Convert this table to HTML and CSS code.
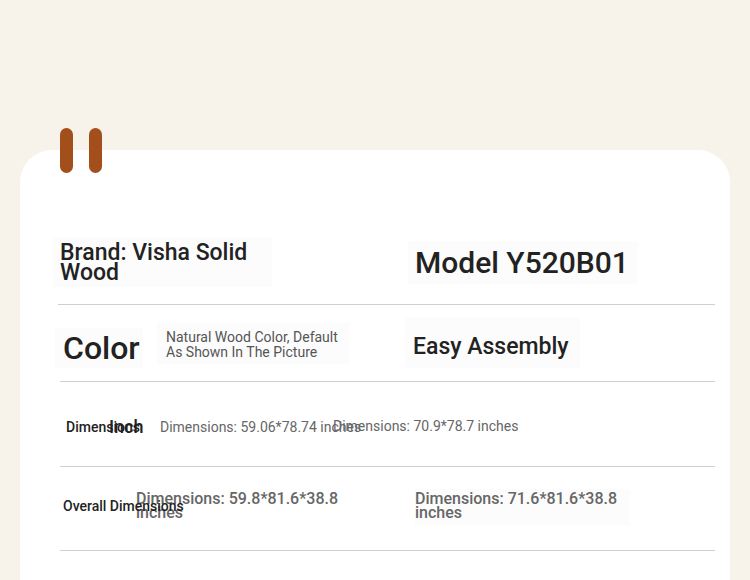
FILE: index.html
```html
<!DOCTYPE html>
<html>
<head>
<meta charset="utf-8">
<link rel="stylesheet" href="styles.css">
</head>
<body>
<div class="page">
  <div class="card">
    <div class="bars"><span class="bar"></span><span class="bar"></span></div>
    <div class="row row1">
      <div class="cell brand">Brand: Visha Solid Wood</div>
      <div class="cell model">Model Y520B01</div>
    </div>
    <div class="row row2">
      <div class="cell color">Color</div>
      <div class="cell natural">Natural Wood Color, Default As Shown In The Picture</div>
      <div class="cell easy">Easy Assembly</div>
    </div>
    <div class="row row3">
      <div class="cell dim-label">Dimensions</div>
      <div class="cell inch">Inch</div>
      <div class="cell dim-a">Dimensions: 59.06*78.74 inches</div>
      <div class="cell dim-b">Dimensions: 70.9*78.7 inches</div>
    </div>
    <div class="row row4">
      <div class="cell overall">Overall Dimensions</div>
      <div class="cell ov-a">Dimensions: 59.8*81.6*38.8 inches</div>
      <div class="cell ov-b">Dimensions: 71.6*81.6*38.8 inches</div>
    </div>
  </div>
</div>
</body>
</html>
```
FILE: styles.css
```css
html, body {
  margin: 0;
  padding: 0;
}
body {
  background: #f8f3ea;
  font-family: Roboto, "Liberation Sans", sans-serif;
  color: #222;
  width: 750px;
  height: 580px;
  overflow: hidden;
}
.page {
  padding: 150px 20px 0 20px;
}
.card {
  position: relative;
  background: #fff;
  border-radius: 32px;
  height: 460px;
  padding: 70px 15px 0 40px;
  box-sizing: border-box;
}
.bars {
  position: absolute;
  left: 40px;
  top: -22px;
  display: flex;
  gap: 16px;
}
.bar {
  width: 13px;
  height: 45px;
  border-radius: 7px;
  background: #a24f1c;
}
.row {
  display: flex;
  align-items: center;
  border-bottom: 1px solid #cfcfcf;
}
.cell {
  box-sizing: border-box;
  flex: none;
  background: #fcfcfc;
}
.row1 {
  height: 84px;
  margin-left: -2px;
}
.brand {
  margin-left: -5px;
  width: 219px;
  padding: 6px 7px 4px 7px;
  font-size: 23px;
  line-height: 20px;
  font-weight: 500;
}
.model {
  margin-left: 136px;
  width: 230px;
  padding: 0 7px;
  height: 43px;
  line-height: 43px;
  font-size: 30px;
  font-weight: 500;
  white-space: nowrap;
}
.row2 {
  height: 76px;
}
.color {
  margin-left: -5px;
  width: 88px;
  padding-left: 8px;
  font-size: 32px;
  line-height: 40px;
  font-weight: 500;
  margin-top: 9px;
}
.natural {
  margin-left: 14px;
  width: 193px;
  padding: 8px 9px 4px 9px;
  font-size: 14px;
  line-height: 15px;
  color: #555;
  font-weight: 400;
}
.easy {
  margin-left: 55px;
  width: 175px;
  padding: 16px 5px 8px 8px;
  font-size: 23px;
  line-height: 26px;
  font-weight: 500;
}
.row3 {
  height: 84px;
}
.dim-label {
  width: 49px;
  padding-left: 6px;
  font-size: 14px;
  white-space: nowrap;
  font-weight: 500;
  line-height: 30px;
  margin-top: 6px;
  background: transparent;
  position: relative;
}
.inch {
  width: 51px;
  font-size: 18px;
  line-height: 30px;
  white-space: nowrap;
  font-weight: 500;
  margin-top: 6px;
  background: transparent;
}
.dim-a {
  width: 173px;
  font-size: 14px;
  color: #666;
  white-space: nowrap;
  line-height: 30px;
  margin-top: 5px;
  background: transparent;
}
.dim-b {
  width: 200px;
  font-size: 14px;
  color: #666;
  white-space: nowrap;
  line-height: 30px;
  margin-top: 3px;
  background: transparent;
}
.row4 {
  height: 83px;
}
.overall {
  width: 76px;
  padding-left: 3px;
  font-size: 14px;
  font-weight: 500;
  white-space: nowrap;
  line-height: 40px;
  margin-top: -6px;
  position: relative;
  z-index: 1;
  background: transparent;
}
.ov-a {
  width: 250px;
  padding: 3px 40px 6px 0;
  font-size: 16px;
  line-height: 14px;
  color: #666;
  font-weight: 500;
  margin-top: -2px;
  background: transparent;
}
.ov-b {
  margin-left: 29px;
  width: 215px;
  padding: 3px 10px 6px 0;
  font-size: 16px;
  line-height: 14px;
  color: #666;
  font-weight: 500;
  margin-top: -2px;
}
```
